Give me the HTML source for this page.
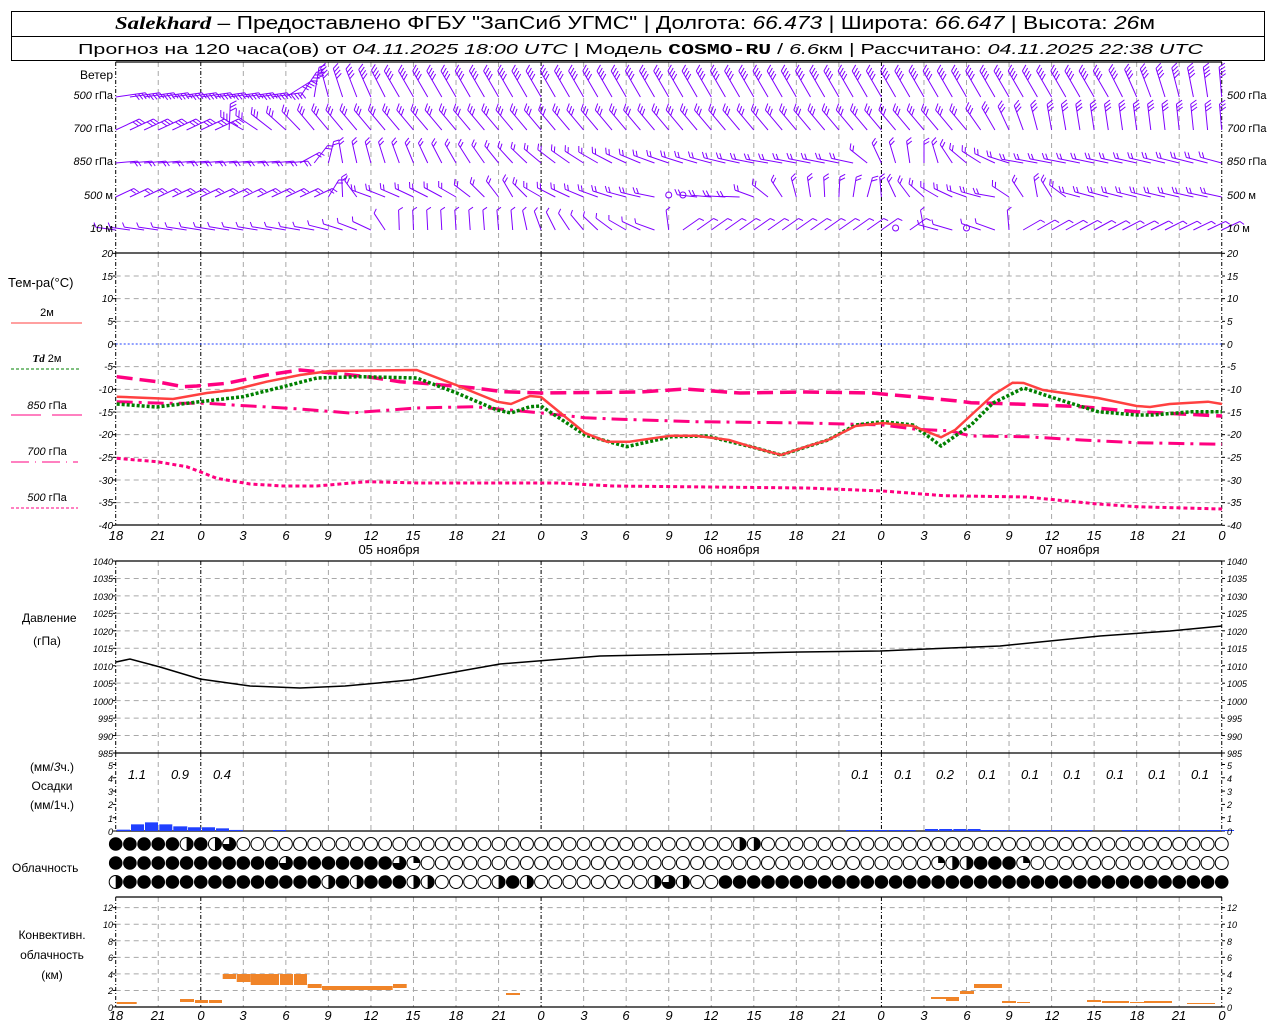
<!DOCTYPE html>
<html><head><meta charset="utf-8">
<style>
html,body{margin:0;padding:0;background:#fff;}
svg{display:block;}
text{font-family:"Liberation Sans","DejaVu Sans",sans-serif;fill:#000;}
.it{font-style:italic;}
.tk{font-size:10px;font-style:italic;}
</style></head><body>
<svg id="s" width="1280" height="1024" viewBox="0 0 1280 1024" xmlns="http://www.w3.org/2000/svg">
<rect x="0" y="0" width="1280" height="1024" fill="#fff"/>
<g id="grid"></g>
<g id="data"></g>
<rect x="11.5" y="11.5" width="1253" height="49" fill="none" stroke="#000" stroke-width="1"/>
<line x1="11" y1="36.5" x2="1265" y2="36.5" stroke="#000"/>
<text x="115" y="29" font-size="18" textLength="1040" lengthAdjust="spacingAndGlyphs"><tspan font-family="Liberation Serif" font-style="italic" font-weight="bold">Salekhard</tspan> – Предоставлено ФГБУ "ЗапСиб УГМС" | Долгота: <tspan font-style="italic">66.473</tspan> | Широта: <tspan font-style="italic">66.647</tspan> | Высота: <tspan font-style="italic">26</tspan>м</text>
<text x="78" y="54" font-size="15" textLength="1125" lengthAdjust="spacingAndGlyphs">Прогноз на 120 часа(ов) от <tspan font-style="italic">04.11.2025 18:00 UTC</tspan> | Модель <tspan font-family="Liberation Mono" font-weight="bold">COSMO-RU</tspan> / <tspan font-style="italic">6.6</tspan>км | Рассчитано: <tspan font-style="italic">04.11.2025 22:38 UTC</tspan></text>

<text x="113" y="79" font-size="12" text-anchor="end">Ветер</text>
<text x="113" y="99" font-size="11" text-anchor="end"><tspan class="it">500</tspan> гПа</text>
<text x="113" y="132" font-size="11" text-anchor="end"><tspan class="it">700</tspan> гПа</text>
<text x="113" y="165" font-size="11" text-anchor="end"><tspan class="it">850</tspan> гПа</text>
<text x="113" y="199" font-size="11" text-anchor="end"><tspan class="it">500</tspan> м</text>
<text x="113" y="232" font-size="11" text-anchor="end"><tspan class="it">10</tspan>   м</text>
<text x="1227" y="99" font-size="11"><tspan class="it">500</tspan> гПа</text>
<text x="1227" y="132" font-size="11"><tspan class="it">700</tspan> гПа</text>
<text x="1227" y="165" font-size="11"><tspan class="it">850</tspan> гПа</text>
<text x="1227" y="199" font-size="11"><tspan class="it">500</tspan> м</text>
<text x="1227" y="232" font-size="11"><tspan class="it">10</tspan>   м</text>

<text x="8" y="287" font-size="13">Тем-ра(°C)</text>
<text x="47" y="316" font-size="11" text-anchor="middle">2м</text>
<line x1="11" y1="323" x2="82" y2="323" stroke="#ff4040" stroke-width="1"/>
<text x="47" y="362" font-size="11" text-anchor="middle"><tspan font-family="Liberation Serif" font-style="italic" font-weight="bold">Td</tspan>  2м</text>
<line x1="11" y1="369" x2="79" y2="369" stroke="#008000" stroke-width="1" stroke-dasharray="3,2"/>
<text x="47" y="409" font-size="11" text-anchor="middle"><tspan class="it">850</tspan> гПа</text>
<line x1="11" y1="415" x2="82" y2="415" stroke="#ff0080" stroke-width="1" stroke-dasharray="30,11"/>
<text x="47" y="455" font-size="11" text-anchor="middle"><tspan class="it">700</tspan> гПа</text>
<line x1="11" y1="462" x2="78" y2="462" stroke="#ff0080" stroke-width="1" stroke-dasharray="18,6,1,6"/>
<text x="47" y="501" font-size="11" text-anchor="middle"><tspan class="it">500</tspan> гПа</text>
<line x1="11" y1="508" x2="78" y2="508" stroke="#ff0080" stroke-width="1" stroke-dasharray="3,2"/>

<g>
<text x="113" y="257" text-anchor="end" class="tk">20</text><text x="113" y="280" text-anchor="end" class="tk">15</text><text x="113" y="302" text-anchor="end" class="tk">10</text><text x="113" y="325" text-anchor="end" class="tk">5</text><text x="113" y="348" text-anchor="end" class="tk">0</text><text x="113" y="370" text-anchor="end" class="tk">-5</text><text x="113" y="393" text-anchor="end" class="tk">-10</text><text x="113" y="416" text-anchor="end" class="tk">-15</text><text x="113" y="438" text-anchor="end" class="tk">-20</text><text x="113" y="461" text-anchor="end" class="tk">-25</text><text x="113" y="484" text-anchor="end" class="tk">-30</text><text x="113" y="506" text-anchor="end" class="tk">-35</text><text x="113" y="529" text-anchor="end" class="tk">-40</text>
<text x="1227" y="257" class="tk">20</text><text x="1227" y="280" class="tk">15</text><text x="1227" y="302" class="tk">10</text><text x="1227" y="325" class="tk">5</text><text x="1227" y="348" class="tk">0</text><text x="1227" y="370" class="tk">-5</text><text x="1227" y="393" class="tk">-10</text><text x="1227" y="416" class="tk">-15</text><text x="1227" y="438" class="tk">-20</text><text x="1227" y="461" class="tk">-25</text><text x="1227" y="484" class="tk">-30</text><text x="1227" y="506" class="tk">-35</text><text x="1227" y="529" class="tk">-40</text>
</g>

<g font-size="13" font-style="italic" text-anchor="middle">
<text x="116" y="540">18</text><text x="158" y="540">21</text><text x="201" y="540">0</text><text x="243" y="540">3</text><text x="286" y="540">6</text><text x="328" y="540">9</text><text x="371" y="540">12</text><text x="413" y="540">15</text><text x="456" y="540">18</text><text x="499" y="540">21</text><text x="541" y="540">0</text><text x="584" y="540">3</text><text x="626" y="540">6</text><text x="669" y="540">9</text><text x="711" y="540">12</text><text x="754" y="540">15</text><text x="796" y="540">18</text><text x="839" y="540">21</text><text x="881" y="540">0</text><text x="924" y="540">3</text><text x="967" y="540">6</text><text x="1009" y="540">9</text><text x="1052" y="540">12</text><text x="1094" y="540">15</text><text x="1137" y="540">18</text><text x="1179" y="540">21</text><text x="1222" y="540">0</text>
</g>
<g font-size="13" text-anchor="middle">
<text x="389" y="554">05 ноября</text><text x="729" y="554">06 ноября</text><text x="1069" y="554">07 ноября</text>
</g>
<g font-size="13" font-style="italic" text-anchor="middle">
<text x="116" y="1020">18</text><text x="158" y="1020">21</text><text x="201" y="1020">0</text><text x="243" y="1020">3</text><text x="286" y="1020">6</text><text x="328" y="1020">9</text><text x="371" y="1020">12</text><text x="413" y="1020">15</text><text x="456" y="1020">18</text><text x="499" y="1020">21</text><text x="541" y="1020">0</text><text x="584" y="1020">3</text><text x="626" y="1020">6</text><text x="669" y="1020">9</text><text x="711" y="1020">12</text><text x="754" y="1020">15</text><text x="796" y="1020">18</text><text x="839" y="1020">21</text><text x="881" y="1020">0</text><text x="924" y="1020">3</text><text x="967" y="1020">6</text><text x="1009" y="1020">9</text><text x="1052" y="1020">12</text><text x="1094" y="1020">15</text><text x="1137" y="1020">18</text><text x="1179" y="1020">21</text><text x="1222" y="1020">0</text>
</g>

<text x="22" y="622" font-size="12">Давление</text>
<text x="47" y="645" font-size="12" text-anchor="middle">(гПа)</text>
<g font-size="9" font-style="italic">
<text x="113" y="565" text-anchor="end">1040</text><text x="113" y="582" text-anchor="end">1035</text><text x="113" y="600" text-anchor="end">1030</text><text x="113" y="617" text-anchor="end">1025</text><text x="113" y="635" text-anchor="end">1020</text><text x="113" y="652" text-anchor="end">1015</text><text x="113" y="670" text-anchor="end">1010</text><text x="113" y="687" text-anchor="end">1005</text><text x="113" y="705" text-anchor="end">1000</text><text x="113" y="722" text-anchor="end">995</text><text x="113" y="740" text-anchor="end">990</text><text x="113" y="757" text-anchor="end">985</text>
<text x="1227" y="565">1040</text><text x="1227" y="582">1035</text><text x="1227" y="600">1030</text><text x="1227" y="617">1025</text><text x="1227" y="635">1020</text><text x="1227" y="652">1015</text><text x="1227" y="670">1010</text><text x="1227" y="687">1005</text><text x="1227" y="705">1000</text><text x="1227" y="722">995</text><text x="1227" y="740">990</text><text x="1227" y="757">985</text>
</g>

<text x="52" y="771" font-size="12" text-anchor="middle">(мм/<tspan class="it">3</tspan>ч.)</text>
<text x="52" y="790" font-size="12" text-anchor="middle">Осадки</text>
<text x="52" y="809" font-size="12" text-anchor="middle">(мм/1ч.)</text>
<g font-size="9" font-style="italic">
<text x="113" y="835" text-anchor="end">0</text><text x="113" y="822" text-anchor="end">1</text><text x="113" y="808" text-anchor="end">2</text><text x="113" y="795" text-anchor="end">3</text><text x="113" y="782" text-anchor="end">4</text><text x="113" y="769" text-anchor="end">5</text>
<text x="1227" y="835">0</text><text x="1227" y="822">1</text><text x="1227" y="808">2</text><text x="1227" y="795">3</text><text x="1227" y="782">4</text><text x="1227" y="769">5</text>
</g>
<g font-size="13" font-style="italic" text-anchor="middle">
<text x="137" y="779">1.1</text><text x="180" y="779">0.9</text><text x="222" y="779">0.4</text>
<text x="860" y="779">0.1</text><text x="903" y="779">0.1</text><text x="945" y="779">0.2</text><text x="987" y="779">0.1</text><text x="1030" y="779">0.1</text><text x="1072" y="779">0.1</text><text x="1115" y="779">0.1</text><text x="1157" y="779">0.1</text><text x="1200" y="779">0.1</text>
</g>

<text x="12" y="872" font-size="12">Облачность</text>

<text x="52" y="939" font-size="12" text-anchor="middle">Конвективн.</text>
<text x="52" y="959" font-size="12" text-anchor="middle">облачность</text>
<text x="52" y="979" font-size="12" text-anchor="middle">(км)</text>
<g font-size="9" font-style="italic">
<text x="113" y="1011" text-anchor="end">0</text><text x="113" y="994" text-anchor="end">2</text><text x="113" y="978" text-anchor="end">4</text><text x="113" y="961" text-anchor="end">6</text><text x="113" y="945" text-anchor="end">8</text><text x="113" y="928" text-anchor="end">10</text><text x="113" y="911" text-anchor="end">12</text>
<text x="1227" y="1011">0</text><text x="1227" y="994">2</text><text x="1227" y="978">4</text><text x="1227" y="961">6</text><text x="1227" y="945">8</text><text x="1227" y="928">10</text><text x="1227" y="911">12</text>
</g>
</svg>
<script>
(function(){
var NS="http://www.w3.org/2000/svg";
var G=document.getElementById("grid"),D=document.getElementById("data");
function el(p,t,a){var e=document.createElementNS(NS,t);for(var k in a)e.setAttribute(k,a[k]);p.appendChild(e);return e;}
function ln(p,x1,y1,x2,y2,a){a=a||{};a.x1=x1;a.y1=y1;a.x2=x2;a.y2=y2;return el(p,"line",a);}
var X0=115.7,XS=42.54,XR=1222;
var gray={stroke:"#a8a8a8","stroke-width":1,"stroke-dasharray":"5,4"};
function hg(y){ln(G,X0,y,XR,y,gray);}
for(var T=15;T>=-35;T-=5){if(T!=0)hg(344-T*4.533);}
for(var i=1;i<11;i++)hg(561+i*17.455);
for(var k=1;k<=6;k++)hg(1007-k*16.56);
var sects=[[62,253],[253,525],[561,753],[753,831],[897,1007]];
for(var k=0;k<=26;k++){var x=X0+k*XS;var mid=(k%8==2)||k==0;
 sects.forEach(function(s){ln(G,x,s[0],x,s[1],mid?{stroke:"#000","stroke-width":1,"stroke-dasharray":"4,2,1,2"}:gray);});}
function ticks(ys){ys.forEach(function(y){ln(G,X0-3,y,X0,y,{stroke:"#000"});ln(G,XR,y,XR+3,y,{stroke:"#000"});});}
var a=[];for(var T=20;T>=-40;T-=5)a.push(344-T*4.533);ticks(a);
a=[];for(var i=0;i<=11;i++)a.push(561+i*17.455);ticks(a);
a=[];for(var i=0;i<=5;i++)a.push(831-i*13.3);ticks(a);
a=[];for(var i=0;i<=6;i++)a.push(1007-i*16.56);ticks(a);
[62,253,525,561,753,831,897,1007].forEach(function(y){ln(G,X0,y,XR,y,{stroke:"#000","stroke-width":1.2});});
ln(G,X0,344,XR,344,{stroke:"#2040ff","stroke-width":1,"stroke-dasharray":"2,2"});
var P="#8000ff";
function interp(kf,i){for(var j=0;j<kf.length-1;j++){if(i>=kf[j][0]&&i<=kf[j+1][0]){var t=(i-kf[j][0])/(kf[j+1][0]-kf[j][0]);return kf[j][1]+t*(kf[j+1][1]-kf[j][1]);}}return kf[kf.length-1][1];}
var rows=[
 {y:97,n:4,L:30,F:7,kf:[[0,8],[11,8],[15,105],[20,120],[70,120],[78,95]]},
 {y:130,n:3,L:26,F:7,kf:[[0,25],[7,25],[9,150],[14,130],[60,130],[66,100],[78,95]]},
 {y:163,n:2,L:22,F:6,kf:[[0,5],[12,5],[16,100],[26,125],[30,140],[38,160],[46,170],[52,168],[54,115],[57,90],[60,140],[64,170],[78,165]]},
 {y:197,n:2,L:20,F:6,kf:[[0,25],[14,25],[18,160],[24,150],[28,120],[30,150],[36,165],[40,172],[44,178],[48,105],[53,75],[55,115],[58,150],[62,170],[65,100],[68,165],[78,168]]},
 {y:230,n:1,L:20,F:5,kf:[[0,172],[14,170],[18,155],[20,92],[28,95],[30,110],[33,130],[36,150],[38,160],[40,35],[56,35],[58,165],[62,160],[64,30],[78,25]]}
];
var calm={"3,39":1,"3,40":1,"4,55":1,"4,60":1};
rows.forEach(function(r,ri){
 for(var i=0;i<79;i++){
  var x=X0+i*14.18;
  if(calm[ri+","+i]){el(D,"circle",{cx:x,cy:r.y-2,r:3,fill:"none",stroke:P});continue;}
  var a=interp(r.kf,i)*Math.PI/180;
  var dx=Math.cos(a),dy=-Math.sin(a);
  var tx=x+dx*r.L,ty=r.y+dy*r.L;
  var d="M"+x.toFixed(1)+" "+r.y+"L"+tx.toFixed(1)+" "+ty.toFixed(1);
  var fa=a-Math.PI/3,fx=Math.cos(fa)*r.F,fy=-Math.sin(fa)*r.F;
  for(var k=0;k<r.n;k++){var px=tx-dx*k*3.5,py=ty-dy*k*3.5;d+="M"+px.toFixed(1)+" "+py.toFixed(1)+"l"+fx.toFixed(1)+" "+fy.toFixed(1);}
  el(D,"path",{d:d,stroke:P,"stroke-width":1,fill:"none"});
 }
});
function pl(pts,st){var s=pts.map(function(p){return p[0]+","+p[1];}).join(" ");st.points=s;st.fill="none";el(D,"polyline",st);}
var c500=[[116.7,458.3],[156.7,461.7],[186.7,466.7],[200,471.7],[216.7,478.3],[250,484],[283,486],[316.7,486],[366.7,481.7],[420,483],[558,483],[613,486],[806,488],[883,491],[944,495.7],[1026,497],[1098,504],[1136.6,506.7],[1222,509]];
pl(c500,{stroke:"#ff0080","stroke-width":3,"stroke-dasharray":"4,3"});
var c700=[[116.7,401.7],[166.7,403.3],[206.7,403.3],[233,405],[266.7,407],[300,409],[350,413],[416.7,408],[475,406.7],[541,413],[585,417.7],[613,419],[696,421.7],[806,423],[883,425],[916,429.3],[949,430.7],[971,436],[1026,436.7],[1081.5,440],[1136.6,442.7],[1222,444.3]];
pl(c700,{stroke:"#ff0080","stroke-width":3,"stroke-dasharray":"16,6,3,6"});
var c850=[[116.7,376.7],[156.7,381.7],[183,386.7],[196.7,386],[226.7,383.3],[266.7,375],[300,370],[333,373],[366.7,376.7],[400,381.7],[420,383],[475,388],[502.7,391.7],[541,393],[640.5,392],[684.6,389],[740,393],[806,392],[872,393],[916,397],[955,400.7],[971,402.7],[1015,404],[1081.5,406.7],[1136.6,411.7],[1222,416]];
pl(c850,{stroke:"#ff0080","stroke-width":3.5,"stroke-dasharray":"16,7"});
var td=[[116.7,404],[156.7,407],[200,401.7],[243,396.7],[283,386.7],[316.7,378],[360,376.7],[416.7,378],[456,392.7],[497,410],[511,413],[530,406.7],[541,406],[585,435],[626.7,446.7],[671,436.7],[706.7,436],[751,446.7],[781,455],[828,440],[855.5,425],[883,421.7],[913,425],[941,446],[971,425],[993,403],[1023.6,388],[1054,398],[1098,411.7],[1136.6,415],[1153,415],[1192,411.7],[1222,411.7]];
pl(td,{stroke:"#008000","stroke-width":3.5,"stroke-dasharray":"3,2"});
var t2=[[116.7,396.7],[173,399],[206.7,393],[233,390],[266.7,381.7],[300,375],[330,371],[416.7,370],[456,385],[497,401.7],[511,404],[530,396],[541,397],[585,433],[607,441.7],[629.5,441.7],[671,435.7],[696,435.7],[729,440],[751,446.7],[781,455],[806,446.7],[828,440],[855.5,426],[883,423],[913,426],[941,437.3],[955,430],[993,395],[1012.6,382.7],[1023.6,383],[1043,390],[1098,398],[1136.6,406],[1150,407],[1169.7,404],[1208,401.7],[1222,404]];
pl(t2,{stroke:"#ff4040","stroke-width":2.5});
var pr=[[116,662],[130,659],[160,667],[200,679],[250,686],[300,688],[345,686],[410,680],[500,664],[600,656],[700,654],[800,652],[880,651],[950,648],[1000,646],[1100,636],[1170,631],[1222,626]];
pl(pr,{stroke:"#000","stroke-width":1.5});
var pb=[[116.7,130,0.1],[131,144,0.5],[145,158,0.65],[159.3,172.3,0.5],[173.3,187.3,0.35],[188,201,0.28],[202,215,0.28],[216,229,0.2],[230,243,0.08],[273,286,0.05]];
for(var x=846;x<906;x+=14.18)pb.push([x,x+13,0.06]);
for(var x=925;x<980;x+=14.18)pb.push([x,x+13,0.15]);
for(var x=980;x<1222;x+=14.18)if(x<1092||x>1110)pb.push([x,x+13,0.05]);
pb.forEach(function(b){var h=Math.max(1,b[2]*13.3);el(D,"rect",{x:b[0],y:831-h,width:b[1]-b[0],height:h,fill:"#2040ff"});});
var O="#f08428";
var cb=[[116.7,136.7,1002,1004],[180,194,999,1002],[195,208,1000,1003],[209,222,1000,1003],[222.7,236,974,979],[236.7,250.7,974,982],[250.7,279,974,985],[280,293,974,985],[294,307,974,985],[307.7,321.7,984,988],[322,392.7,986,990],[393,406.7,984,988],[506,520,993,995],[931,946,997,999],[946,959,997,1001],[960,974,991,994],[974,1002,984,988],[1002,1016,1001,1003],[1017,1030,1002,1003],[1087,1101,1000,1002],[1102,1129,1001,1003],[1130,1144,1002,1003],[1144,1172,1001,1003],[1187,1215,1003,1004]];
cb.forEach(function(b){el(D,"rect",{x:b[0],y:b[2],width:b[1]-b[0],height:b[3]-b[2],fill:O});});
function row(spec){var a=[];for(var i=0;i<79;i++)a.push("E");spec.forEach(function(s){for(var i=s[0];i<=s[1];i++)a[i]=s[2];});return a;}
var R1=row([[0,4,"F"],[5,5,"H"],[6,6,"F"],[7,7,"H"],[8,8,"T"],[44,45,"H"]]);
var R2=row([[0,11,"F"],[12,12,"T"],[13,19,"F"],[20,20,"T"],[21,21,"Q"],[58,58,"Q"],[59,60,"H"],[61,63,"F"],[64,64,"Q"]]);
var R3=row([[0,0,"H"],[1,14,"F"],[15,15,"H"],[16,16,"F"],[17,17,"H"],[18,20,"F"],[21,22,"H"],[27,27,"H"],[28,28,"F"],[29,29,"H"],[38,38,"H"],[39,39,"T"],[40,40,"H"],[43,78,"F"]]);
[[R1,844],[R2,863],[R3,882]].forEach(function(rr){
 rr[0].forEach(function(t,i){var cx=X0+i*14.18,cy=rr[1],r=6.5;
  if(t=="F"){el(D,"circle",{cx:cx,cy:cy,r:r+0.3,fill:"#000"});return;}
  el(D,"circle",{cx:cx,cy:cy,r:r,fill:"#fff",stroke:"#000","stroke-width":1});
  if(t=="H"){el(D,"path",{d:"M"+cx+" "+(cy-r)+"A"+r+" "+r+" 0 0 1 "+cx+" "+(cy+r)+"Z",fill:"#000"});}
  if(t=="Q"){el(D,"path",{d:"M"+cx+" "+cy+"L"+cx+" "+(cy-r)+"A"+r+" "+r+" 0 0 1 "+(cx+r)+" "+cy+"Z",fill:"#000"});}
  if(t=="T"){el(D,"path",{d:"M"+cx+" "+cy+"L"+cx+" "+(cy-r)+"A"+r+" "+r+" 0 1 1 "+(cx-r)+" "+cy+"Z",fill:"#000"});}
 });
});
})();
</script>
</body></html>
